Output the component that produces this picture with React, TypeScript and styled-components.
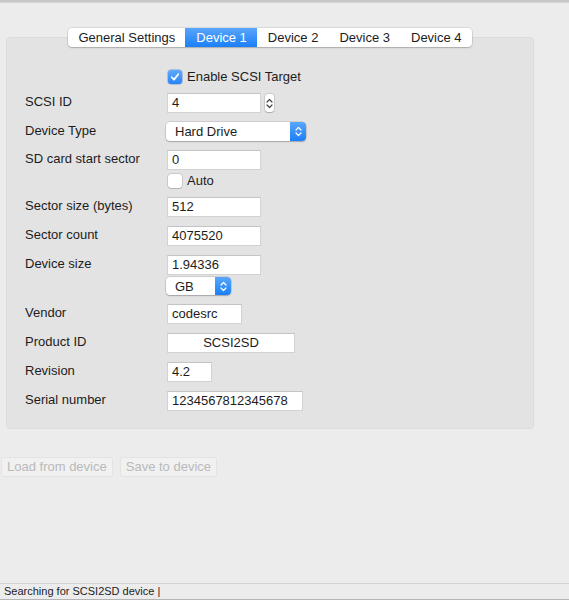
import React from "react";
import styled, { createGlobalStyle } from "styled-components";

const GlobalStyle = createGlobalStyle`
  html, body {
    margin: 0;
    padding: 0;
    background: #ececec;
  }
  body {
    font-family: "Liberation Sans", Arial, sans-serif;
    font-size: 13px;
    color: #1c1c1c;
  }
  * { box-sizing: border-box; }
`;

const Window = styled.div`
  width: 569px;
  height: 600px;
  display: flex;
  flex-direction: column;
  background: #ececec;
  overflow: hidden;
`;

const TitleEdge = styled.div`
  height: 3px;
  flex: none;
  background: linear-gradient(#c4c4c4, #c9c9c9 66%, #dedede);
`;

const TabBar = styled.div`
  position: relative;
  z-index: 1;
  margin: 25px 0 -10px 6px;
  width: 528px;
  display: flex;
  justify-content: center;
`;

const Segments = styled.div`
  display: flex;
  height: 19px;
  background: #fff;
  border-radius: 4px;
  box-shadow: 0 0 0 0.5px rgba(0, 0, 0, 0.16), 0 1px 1.5px rgba(0, 0, 0, 0.18);
  overflow: hidden;
`;

const Tab = styled.div<{ $active?: boolean }>`
  height: 19px;
  padding: 0 10px;
  display: flex;
  align-items: center;
  line-height: 19px;
  white-space: nowrap;
  color: ${(p) => (p.$active ? "#fff" : "#1c1c1c")};
  background: ${(p) =>
    p.$active ? "linear-gradient(#5aa6fb, #1b7ff7)" : "transparent"};
  & + & {
    border-left: 1px solid ${(p) => (p.$active ? "transparent" : "#e2e2e2")};
  }
`;

const Panel = styled.div`
  margin-left: 6px;
  width: 528px;
  height: 392px;
  flex: none;
  background: #e3e3e3;
  border: 1px solid #dcdcdc;
  border-radius: 4px;
  padding: 31px 0 0 18px;
`;

const Form = styled.div`
  display: flex;
  flex-direction: column;
  gap: 9px;
`;

const Row = styled.div`
  display: grid;
  grid-template-columns: 142px auto;
  align-items: start;
`;

const Label = styled.div`
  line-height: 18px;
  white-space: nowrap;
`;

const Controls = styled.div<{ $gap?: number }>`
  display: flex;
  flex-direction: column;
  align-items: flex-start;
  gap: ${(p) => p.$gap ?? 3}px;
`;

const Inline = styled.div`
  display: flex;
  align-items: center;
  gap: 4px;
`;

const TextField = styled.div<{ $w: number; $center?: boolean }>`
  width: ${(p) => p.$w}px;
  height: 20px;
  background: #fff;
  border: 1px solid #d2d2d2;
  border-top-color: #c4c4c4;
  padding: 0 4px;
  line-height: 20px;
  display: flex;
  align-items: center;
  justify-content: ${(p) => (p.$center ? "center" : "flex-start")};
  white-space: nowrap;
  overflow: hidden;
`;

const Stepper = styled.div`
  width: 9px;
  height: 18px;
  background: #fff;
  border-radius: 3px;
  box-shadow: 0 0 0 0.5px rgba(0, 0, 0, 0.2), 0 1px 1px rgba(0, 0, 0, 0.15);
  display: flex;
  align-items: center;
  justify-content: center;
`;

const Popup = styled.div<{ $w: number; $h: number }>`
  width: ${(p) => p.$w}px;
  height: ${(p) => p.$h}px;
  background: #fff;
  border-radius: 4px;
  box-shadow: 0 0 0 0.5px rgba(0, 0, 0, 0.18), 0 1px 1.5px rgba(0, 0, 0, 0.2);
  display: flex;
  align-items: stretch;
  overflow: hidden;
  margin-left: -1px;
`;

const PopupText = styled.div`
  flex: 1;
  padding-left: 9px;
  display: flex;
  align-items: center;
  white-space: nowrap;
`;

const PopupArrows = styled.div`
  width: 16px;
  background: linear-gradient(#5aa6fb, #1b7ff7);
  display: flex;
  align-items: center;
  justify-content: center;
`;

const CheckLine = styled.label`
  display: flex;
  align-items: center;
  gap: 5px;
  height: 15px;
  line-height: 15px;
  margin-left: 1px;
  white-space: nowrap;
`;

const Box = styled.span<{ $checked?: boolean }>`
  width: 14px;
  height: 14px;
  border-radius: 3px;
  flex: none;
  display: flex;
  align-items: center;
  justify-content: center;
  background: ${(p) => (p.$checked ? "linear-gradient(#61a9fb, #2784f8)" : "#fff")};
  box-shadow: ${(p) =>
    p.$checked
      ? "0 0 0 0.5px rgba(20, 90, 200, 0.5)"
      : "0 0 0 0.5px rgba(0, 0, 0, 0.22), 0 1px 1px rgba(0, 0, 0, 0.12)"};
`;

const ButtonRow = styled.div`
  margin-top: 28px;
  padding-left: 1px;
  display: flex;
  gap: 7px;
`;

const Button = styled.button`
  height: 20px;
  padding: 0 5px;
  font: inherit;
  font-size: 13px;
  color: #b9b9b9;
  background: #f1f1f1;
  border: 1px solid #e3e3e3;
  border-radius: 3px;
  line-height: 18px;
`;

const Spacer = styled.div`
  flex: 1;
`;

const StatusBar = styled.div`
  height: 17px;
  flex: none;
  border-top: 1px solid #d2d2d2;
  border-bottom: 1px solid #b4b4b4;
  background: #ececec;
  font-size: 11px;
  line-height: 15px;
  padding-left: 4px;
  white-space: nowrap;
`;

const UpDown = ({ color }: { color: string }) => (
  <svg width="7" height="11" viewBox="0 0 7 11" fill="none">
    <path d="M1 4 L3.5 1.5 L6 4" stroke={color} strokeWidth="1.2" strokeLinecap="round" strokeLinejoin="round" />
    <path d="M1 7 L3.5 9.5 L6 7" stroke={color} strokeWidth="1.2" strokeLinecap="round" strokeLinejoin="round" />
  </svg>
);

const Tick = () => (
  <svg width="10" height="10" viewBox="0 0 10 10" fill="none">
    <path d="M1.8 5.2 L4 7.6 L8.3 2.2" stroke="#fff" strokeWidth="1.7" strokeLinecap="round" strokeLinejoin="round" />
  </svg>
);

const Check = ({ checked, children }: { checked?: boolean; children: React.ReactNode }) => (
  <CheckLine>
    <Box $checked={checked}>{checked && <Tick />}</Box>
    <span>{children}</span>
  </CheckLine>
);

const tabs = ["General Settings", "Device 1", "Device 2", "Device 3", "Device 4"];

export default function App() {
  return (
    <Window>
      <GlobalStyle />
      <TitleEdge />
      <TabBar>
        <Segments>
          {tabs.map((t) => (
            <Tab key={t} $active={t === "Device 1"}>
              {t}
            </Tab>
          ))}
        </Segments>
      </TabBar>
      <Panel>
        <Form>
          <Row>
            <span />
            <Check checked>Enable SCSI Target</Check>
          </Row>
          <Row>
            <Label>SCSI ID</Label>
            <Inline>
              <TextField $w={94}>4</TextField>
              <Stepper>
                <UpDown color="#444" />
              </Stepper>
            </Inline>
          </Row>
          <Row>
            <Label>Device Type</Label>
            <Popup $w={140} $h={19}>
              <PopupText>Hard Drive</PopupText>
              <PopupArrows>
                <UpDown color="#fff" />
              </PopupArrows>
            </Popup>
          </Row>
          <Row>
            <Label>SD card start sector</Label>
            <Controls>
              <TextField $w={94}>0</TextField>
              <Check>Auto</Check>
            </Controls>
          </Row>
          <Row>
            <Label>Sector size (bytes)</Label>
            <TextField $w={94}>512</TextField>
          </Row>
          <Row>
            <Label>Sector count</Label>
            <TextField $w={94}>4075520</TextField>
          </Row>
          <Row>
            <Label>Device size</Label>
            <Controls $gap={2}>
              <TextField $w={94}>1.94336</TextField>
              <Popup $w={65} $h={18}>
                <PopupText>GB</PopupText>
                <PopupArrows>
                  <UpDown color="#fff" />
                </PopupArrows>
              </Popup>
            </Controls>
          </Row>
          <Row>
            <Label>Vendor</Label>
            <TextField $w={75}>codesrc</TextField>
          </Row>
          <Row>
            <Label>Product ID</Label>
            <TextField $w={128} $center>
              SCSI2SD
            </TextField>
          </Row>
          <Row>
            <Label>Revision</Label>
            <TextField $w={45}>4.2</TextField>
          </Row>
          <Row>
            <Label>Serial number</Label>
            <TextField $w={136}>1234567812345678</TextField>
          </Row>
        </Form>
      </Panel>
      <ButtonRow>
        <Button disabled>Load from device</Button>
        <Button disabled>Save to device</Button>
      </ButtonRow>
      <Spacer />
      <StatusBar>Searching for SCSI2SD device |</StatusBar>
    </Window>
  );
}
